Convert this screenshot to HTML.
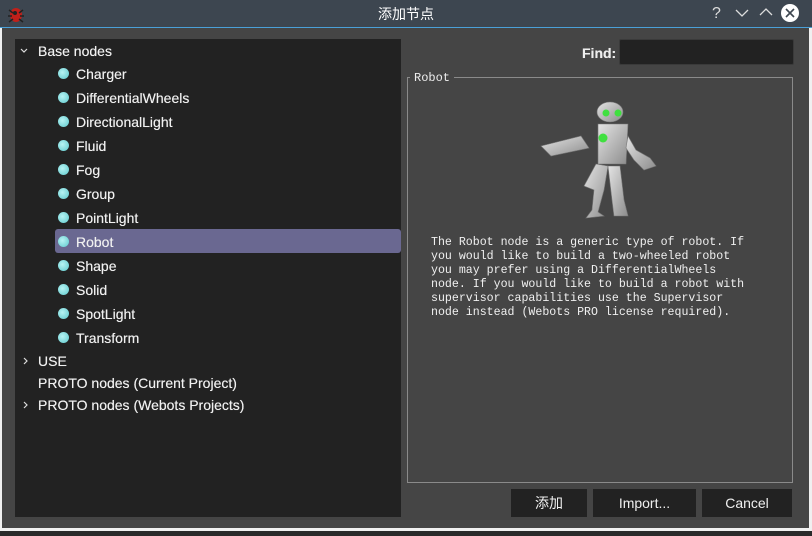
<!DOCTYPE html>
<html><head><meta charset="utf-8"><style>
body{margin:0;width:812px;height:536px;background:#2a2a2a;overflow:hidden;font-family:"Liberation Sans","Noto Sans CJK SC",sans-serif;position:relative}
.win{position:absolute;left:0;top:0;width:812px;height:531px;background:#f0f0f0}
.title{position:absolute;left:0;top:0;width:812px;height:27px;background:#3d4650;border-bottom:1px solid #4aa0d8;color:#fff;font-size:14px;text-align:center;line-height:28px}
.body{position:absolute;left:2px;top:28px;width:807px;height:500px;background:#454545}
.tree{position:absolute;left:15px;top:39px;width:386px;height:478px;background:#222}
.it{position:absolute;color:#f0f0f0;font-size:14px;height:22px;line-height:22px;text-shadow:0 0 0.4px #f0f0f0}
.dot{position:absolute;width:11px;height:11px;border-radius:50%;background:radial-gradient(circle at 40% 40%,#b8f4f4,#5cc8cc)}
.arr{position:absolute}
.sel{position:absolute;left:55px;top:229px;width:346px;height:24px;background:#6a6891;border-radius:3px}
.btn{position:absolute;top:489px;height:28px;background:#222;color:#f0f0f0;font-size:14px;text-align:center;line-height:28px}
.desc{position:absolute;left:431px;top:236px;font-family:"Liberation Mono","DejaVu Sans Mono",monospace;font-size:11.6px;line-height:14px;color:#f0f0f0;white-space:pre}
</style></head><body>
<div class="win"></div>
<div class="title">添加节点
<svg style="position:absolute;left:6px;top:4px" width="20" height="20"><ellipse cx="10" cy="11" rx="6" ry="7" fill="#c0201a"/><path d="M3 6l4 3M17 6l-4 3M2 12h4M18 12h-4M3 18l4-3M17 18l-4-3" stroke="#222" stroke-width="1.5"/><circle cx="9" cy="9" r="2" fill="#222"/></svg>
<span style="position:absolute;left:712px;top:0;font-size:16px;color:#ddd">?</span>
<svg style="position:absolute;left:735px;top:8px" width="14" height="10"><path d="M1 2l6 6 6-6" stroke="#ddd" fill="none" stroke-width="1.3"/></svg>
<svg style="position:absolute;left:759px;top:7px" width="14" height="10"><path d="M1 8l6-6 6 6" stroke="#ddd" fill="none" stroke-width="1.3"/></svg>
<svg style="position:absolute;left:780px;top:3px" width="20" height="20"><circle cx="10" cy="10" r="9" fill="#fff"/><path d="M6 6l8 8M14 6l-8 8" stroke="#3d4650" stroke-width="1.6"/></svg>
</div>
<div class="body"></div>
<div class="tree"></div>
<div class="sel"></div>
<svg class="arr" style="left:20px;top:48px" width="8" height="6"><path d="M1 1l3 3 3-3" stroke="#ddd" fill="none" stroke-width="1.2"/></svg>
<div class="it" style="left:38px;top:40px">Base nodes</div>
<div class="dot" style="left:58px;top:68px"></div><div class="it" style="left:76px;top:63px">Charger</div>
<div class="dot" style="left:58px;top:92px"></div><div class="it" style="left:76px;top:87px">DifferentialWheels</div>
<div class="dot" style="left:58px;top:116px"></div><div class="it" style="left:76px;top:111px">DirectionalLight</div>
<div class="dot" style="left:58px;top:140px"></div><div class="it" style="left:76px;top:135px">Fluid</div>
<div class="dot" style="left:58px;top:164px"></div><div class="it" style="left:76px;top:159px">Fog</div>
<div class="dot" style="left:58px;top:188px"></div><div class="it" style="left:76px;top:183px">Group</div>
<div class="dot" style="left:58px;top:212px"></div><div class="it" style="left:76px;top:207px">PointLight</div>
<div class="dot" style="left:58px;top:236px"></div><div class="it" style="left:76px;top:231px">Robot</div>
<div class="dot" style="left:58px;top:260px"></div><div class="it" style="left:76px;top:255px">Shape</div>
<div class="dot" style="left:58px;top:284px"></div><div class="it" style="left:76px;top:279px">Solid</div>
<div class="dot" style="left:58px;top:308px"></div><div class="it" style="left:76px;top:303px">SpotLight</div>
<div class="dot" style="left:58px;top:332px"></div><div class="it" style="left:76px;top:327px">Transform</div>
<svg class="arr" style="left:23px;top:357px" width="6" height="8"><path d="M1 1l3 3-3 3" stroke="#ddd" fill="none" stroke-width="1.2"/></svg>
<div class="it" style="left:38px;top:350px">USE</div>
<div class="it" style="left:38px;top:372px">PROTO nodes (Current Project)</div>
<svg class="arr" style="left:23px;top:401px" width="6" height="8"><path d="M1 1l3 3-3 3" stroke="#ddd" fill="none" stroke-width="1.2"/></svg>
<div class="it" style="left:38px;top:394px">PROTO nodes (Webots Projects)</div>
<div class="it" style="left:582px;top:42px;font-weight:bold;color:#eee">Find:</div>
<div style="position:absolute;left:619px;top:39px;width:173px;height:24px;background:#222;border-radius:2px;border:1px solid #3a3a3a"></div>
<div style="position:absolute;left:407px;top:77px;width:384px;height:404px;border:1px solid #8a8a8a"></div>
<div style="position:absolute;left:410px;top:70px;padding:0 4px;background:#454545;color:#eee;font-family:'Liberation Mono',monospace;font-size:12px;line-height:16px">Robot</div>
<svg style="position:absolute;left:538px;top:98px" width="125" height="122">
<defs><linearGradient id="g" x1="0" y1="0" x2="1" y2="1"><stop offset="0" stop-color="#e4e4e4"/><stop offset="1" stop-color="#8c8c8c"/></linearGradient></defs>
<g fill="url(#g)" stroke="#777" stroke-width="0.6">
<ellipse cx="72" cy="14" rx="13" ry="10"/>
<path d="M60 26h30l-2 40h-28z"/>
<path d="M3 48l40-10 8 12-38 8z"/>
<path d="M90 38l8 14 14 8 6 8-12 4-10-10-8-12z"/>
<path d="M58 66l12 2-4 24-6 22 6 4-18 2 6-8 2-20-10-4z"/>
<path d="M70 68h12l4 34 4 16h-14l-2-16z"/>
</g>
<circle cx="68" cy="15" r="3.5" fill="#40e040"/><circle cx="80" cy="15" r="3.5" fill="#40e040"/><circle cx="65" cy="40" r="4.5" fill="#40e040"/>
</svg>
<div class="desc">The Robot node is a generic type of robot. If
you would like to build a two-wheeled robot
you may prefer using a DifferentialWheels
node. If you would like to build a robot with
supervisor capabilities use the Supervisor
node instead (Webots PRO license required).</div>
<div class="btn" style="left:511px;width:76px">添加</div>
<div class="btn" style="left:593px;width:103px">Import...</div>
<div class="btn" style="left:702px;width:90px">Cancel</div>
</body></html>
